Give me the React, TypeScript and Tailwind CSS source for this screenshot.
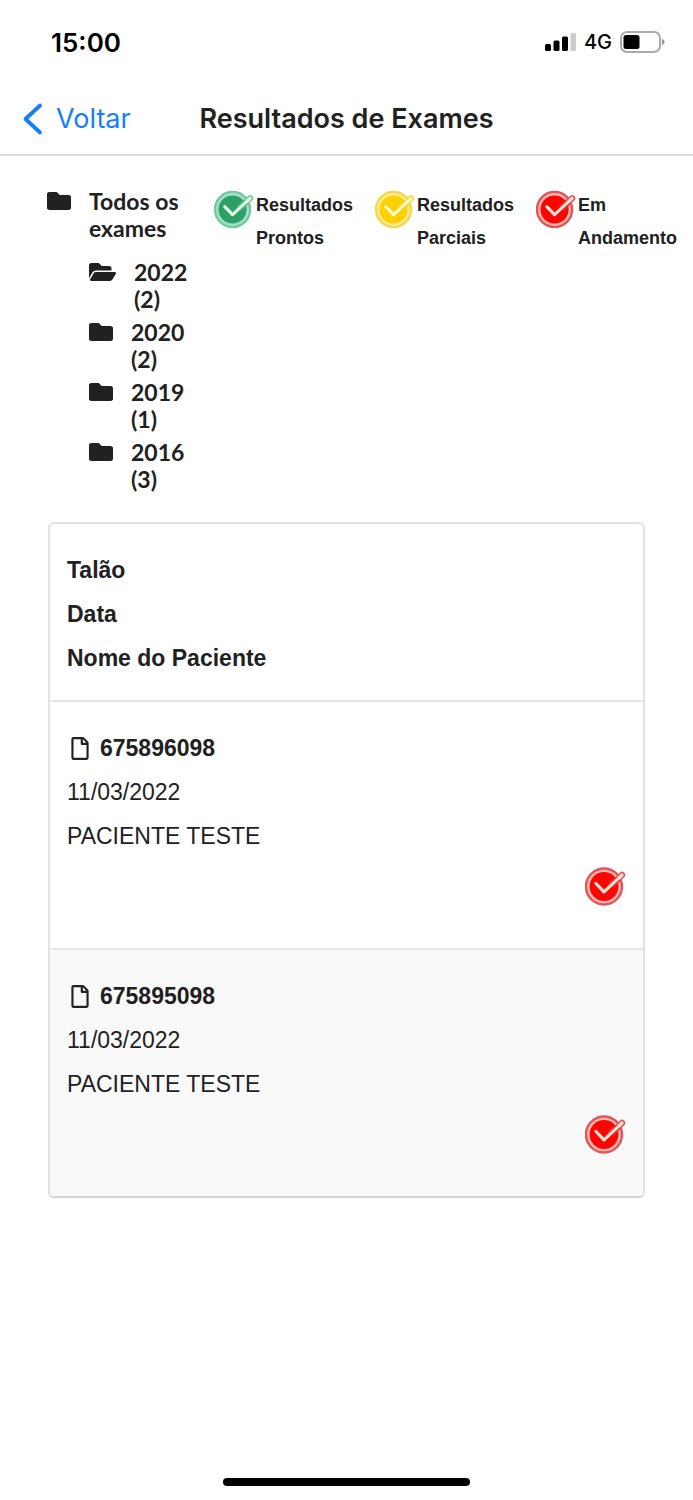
import { FaFolder, FaFolderOpen, FaRegFile } from "react-icons/fa";

type Status = "ready" | "partial" | "pending";

const palette: Record<Status, { disc: string; edge: string; band: string; tick: string }> = {
  ready: { disc: "#2da067", edge: "#74c9a0", band: "#a5e3c6", tick: "#e4fbe9" },
  partial: { disc: "#fdd000", edge: "#f3d84e", band: "#fbeb96", tick: "#fff8cf" },
  pending: { disc: "#fb0505", edge: "#e4525b", band: "#fbb9ac", tick: "#fde3cf" },
};

function StatusIcon({ status, label, className }: { status: Status; label?: string; className: string }) {
  const c = palette[status];
  return (
    <svg
      viewBox="0 0 41 40"
      className={className}
      role={label ? "img" : undefined}
      aria-label={label}
      aria-hidden={label ? undefined : true}
      fill="none"
      strokeLinecap="round"
      strokeLinejoin="round"
    >
      <circle cx="19" cy="20.5" r="18" fill={c.band} stroke={c.edge} strokeWidth="2.4" />
      <circle cx="19" cy="20.5" r="14.4" fill={c.disc} />
      <path d="M27 18.500 37 9" stroke={c.edge} strokeWidth="6.5" />
      <path d="M24 21.500 33 12.800" stroke={c.disc} strokeWidth="5" strokeLinecap="butt" />
      <path d="M11 17.500 19 25.800 37 9" stroke={c.tick} strokeWidth="3.2" />
    </svg>
  );
}

const years = [
  { year: "2022", count: 2, open: true },
  { year: "2020", count: 2, open: false },
  { year: "2019", count: 1, open: false },
  { year: "2016", count: 3, open: false },
];

const legend: { status: Status; text: string }[] = [
  { status: "ready", text: "Resultados Prontos" },
  { status: "partial", text: "Resultados Parciais" },
  { status: "pending", text: "Em Andamento" },
];

const exams = [
  { id: "675896098", date: "11/03/2022", patient: "PACIENTE TESTE" },
  { id: "675895098", date: "11/03/2022", patient: "PACIENTE TESTE" },
];

function StatusBar() {
  return (
    <div className="flex h-[84px] items-center justify-between pr-7 pl-[51px] font-['Inter',sans-serif] text-black">
      <span className="text-[26px] font-semibold">15:00</span>
      <div className="flex items-center gap-2">
        <svg viewBox="0 0 31 18" className="h-[18px] w-[31px]" aria-hidden="true">
          <rect x="0" y="11" width="6" height="7" rx="1.5" fill="#000" />
          <rect x="8.5" y="7.5" width="6" height="10.5" rx="1.5" fill="#000" />
          <rect x="17" y="3.5" width="6" height="14.5" rx="1.5" fill="#000" />
          <rect x="25.5" y="0" width="5.5" height="18" rx="1.5" fill="#ccc" />
        </svg>
        <span className="text-xl font-medium">4G</span>
        <svg viewBox="0 0 45 22" className="h-[22px] w-[45px]" aria-hidden="true">
          <rect x="1" y="1" width="39" height="20" rx="6" fill="none" stroke="#aaa" strokeWidth="2" />
          <rect x="3.5" y="4" width="16" height="14" rx="2.5" fill="#000" />
          <path d="M42 8v6c1.800-.5 2.500-1.700 2.500-3s-.7-2.500-2.500-3z" fill="#999" />
        </svg>
      </div>
    </div>
  );
}

export default function App() {
  return (
    <div className="flex min-h-screen flex-col bg-white font-['Liberation_Sans',sans-serif] text-[#212121]">
      <StatusBar />

      <header className="grid h-[72px] grid-cols-[1fr_auto_1fr] items-center border-b-2 border-[#dcdcdc] px-[22px] font-['Inter',sans-serif] text-[27px]">
        <a href="#voltar" className="flex items-center gap-3 text-[#167efb]">
          <svg viewBox="0 0 22 34" className="h-[34px] w-[22px]" fill="none" aria-hidden="true">
            <path d="M18 3.500 3.500 17 18 30.500" stroke="currentColor" strokeWidth="3.800" strokeLinecap="round" strokeLinejoin="round" />
          </svg>
          Voltar
        </a>
        <h1 className="font-semibold">Resultados de Exames</h1>
      </header>

      <main>
        <div className="flex pt-8 pl-[47px]">
          <nav aria-label="Exames" className="w-[146px] shrink-0 font-['Lato',sans-serif] text-[23px] leading-[27px] font-bold">
            <a href="#todos" className="flex gap-[18px]">
              <FaFolder className="mt-px size-6 shrink-0" />
              <span>Todos os exames</span>
            </a>
            <ul className="mt-[17px] flex flex-col gap-[6px] pl-[42px]">
              {years.map(({ year, count, open }) => (
                <li key={year}>
                  <a href={"#" + year} className="flex gap-[18px]">
                    {open ? <FaFolderOpen className="mt-px h-6 w-[27px] shrink-0" /> : <FaFolder className="mt-px size-6 shrink-0" />}
                    <span>
                      {year} ({count})
                    </span>
                  </a>
                </li>
              ))}
            </ul>
          </nav>

          <ul className="ml-[21px] grid flex-1 grid-cols-[161fr_161fr_157fr] pt-px text-lg leading-[33px] font-bold">
            {legend.map(({ status, text }) => (
              <li key={status} className="flex gap-[2px]">
                <StatusIcon status={status} className="h-10 w-10 shrink-0" />
                <span>{text}</span>
              </li>
            ))}
          </ul>
        </div>

        <div className="mx-12 mt-[29px] overflow-hidden rounded-md border-2 border-[#e2e2e2] border-b-[#d4d4d5]">
          <table className="block w-full text-[23px] leading-[44px]">
            <thead className="block">
              <tr className="block px-[17px] pt-6 pb-5 text-left">
                <th scope="col" className="block">Talão</th>
                <th scope="col" className="block">Data</th>
                <th scope="col" className="block">Nome do Paciente</th>
              </tr>
            </thead>
            <tbody className="block">
              {exams.map(({ id, date, patient }) => (
                <tr key={id} className="block border-t-2 border-[#e5e5e5] px-[17px] pt-6 pb-[42px] even:bg-[#f9f9f9]">
                  <td className="flex items-center gap-[10px] pl-[3px] font-bold">
                    <FaRegFile className="h-[23px] w-[20px]" />
                    {id}
                  </td>
                  <td className="block">{date}</td>
                  <td className="block">{patient}</td>
                  <td className="flex justify-end pt-2">
                    <StatusIcon status="pending" label="Em andamento" className="h-10 w-[41px]" />
                  </td>
                </tr>
              ))}
            </tbody>
          </table>
        </div>
      </main>

      <div className="mx-auto mt-auto mb-[14px] h-2 w-[247px] rounded-full bg-black" />
    </div>
  );
}
